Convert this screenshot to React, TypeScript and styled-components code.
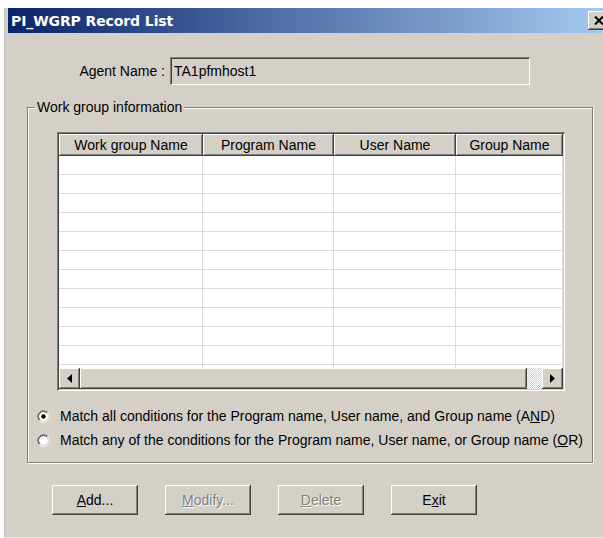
import styled, { createGlobalStyle } from 'styled-components'

const GlobalStyle = createGlobalStyle`
  html, body {
    margin: 0;
    padding: 0;
    background: #fff;
    overflow: hidden;
  }
  body {
    font-family: "Liberation Sans", Arial, sans-serif;
    font-size: 14px;
    color: #000;
  }
`

const columns = [
  { title: 'Work group Name', width: 144 },
  { title: 'Program Name', width: 131 },
  { title: 'User Name', width: 122 },
  { title: 'Group Name', width: 107 },
]
const gridColumns = columns.map((c) => `${c.width}px`).join(' ')

const rows = Array.from({ length: 12 }, (_, i) => i)

function Arrow({ dir }: { dir: 'left' | 'right' }) {
  return (
    <svg width="5" height="9" viewBox="0 0 5 9">
      {dir === 'left' ? (
        <path d="M5 0 L0 4.5 L5 9 Z" fill="#000" />
      ) : (
        <path d="M0 0 L5 4.5 L0 9 Z" fill="#000" />
      )}
    </svg>
  )
}

function RadioMark({ checked }: { checked?: boolean }) {
  return (
    <svg width="13" height="13" viewBox="0 0 13 13">
      <circle cx="6.5" cy="6.5" r="5" fill="#fff" />
      <path d="M2.26 10.74 A6 6 0 0 1 10.74 2.26" stroke="#808080" fill="none" />
      <path d="M10.74 2.26 A6 6 0 0 1 2.26 10.74" stroke="#fff" fill="none" />
      <path d="M2.96 10.04 A5 5 0 0 1 10.04 2.96" stroke="#404040" fill="none" />
      <path d="M10.04 2.96 A5 5 0 0 1 2.96 10.04" stroke="#d4d0c8" fill="none" />
      {checked && <circle cx="6.5" cy="6.5" r="2.2" fill="#000" />}
    </svg>
  )
}

export default function App() {
  return (
    <>
      <GlobalStyle />
      <Window>
        <TitleBar>
          <Title>PI_WGRP Record List</Title>
          <CloseButton>
            <svg width="10" height="9" viewBox="0 0 10 9">
              <path d="M1 0.5 L9 8.5 M9 0.5 L1 8.5" stroke="#000" strokeWidth="2" />
            </svg>
          </CloseButton>
        </TitleBar>
        <Body>
          <AgentRow>
            <AgentLabel>Agent Name :</AgentLabel>
            <AgentField>TA1pfmhost1</AgentField>
          </AgentRow>

          <GroupBox>
            <Legend>Work group information</Legend>
            <ListView>
              <Header>
                {columns.map((c) => (
                  <HeaderCell key={c.title}>{c.title}</HeaderCell>
                ))}
              </Header>
              <ListBody>
                {rows.map((r) => (
                  <Row key={r}>
                    {columns.map((c) => (
                      <Cell key={c.title} />
                    ))}
                  </Row>
                ))}
              </ListBody>
              <HScroll>
                <ScrollButton>
                  <Arrow dir="left" />
                </ScrollButton>
                <Thumb />
                <Track />
                <ScrollButton>
                  <Arrow dir="right" />
                </ScrollButton>
              </HScroll>
            </ListView>

            <RadioList>
              <RadioRow>
                <RadioMark checked />
                <span>
                  Match all conditions for the Program name, User name, and Group name (A
                  <u>N</u>D)
                </span>
              </RadioRow>
              <RadioRow>
                <RadioMark />
                <span>
                  Match any of the conditions for the Program name, User name, or Group name (
                  <u>O</u>R)
                </span>
              </RadioRow>
            </RadioList>
          </GroupBox>

          <ButtonRow>
            <Button>
              <u>A</u>dd...
            </Button>
            <Button $disabled>
              <u>M</u>odify...
            </Button>
            <Button $disabled>
              <u>D</u>elete
            </Button>
            <Button>
              E<u>x</u>it
            </Button>
          </ButtonRow>
        </Body>
      </Window>
    </>
  )
}

const raised = `
  box-shadow: inset -1px -1px #404040, inset 1px 1px #fff, inset -2px -2px #808080;
`

const Window = styled.div`
  margin: 8px 0 0 4px;
  width: 610px;
  height: 530px;
  box-sizing: border-box;
  display: flex;
  flex-direction: column;
  padding: 0 3px 0 3px;
  background: #d4d0c8;
  border-left: 1px solid #c6c3bb;
  border-bottom: 1px solid #ecebe6;
`

const TitleBar = styled.div`
  height: 25px;
  flex-shrink: 0;
  display: flex;
  align-items: center;
  justify-content: space-between;
  padding: 0 2px 0 3px;
  background: linear-gradient(to right, #0a246a, #a6caf0);
`

const Title = styled.span`
  color: #fff;
  font-family: "DejaVu Sans", Tahoma, sans-serif;
  font-weight: bold;
  font-size: 14px;
  letter-spacing: -0.1px;
`

const CloseButton = styled.div`
  width: 21px;
  height: 19px;
  display: flex;
  align-items: center;
  justify-content: center;
  background: #d4d0c8;
  ${raised}
`

const Body = styled.div`
  flex: 1;
  display: flex;
  flex-direction: column;
  padding-top: 24px;
`

const AgentRow = styled.div`
  display: flex;
  align-items: center;
  height: 28px;
`

const AgentLabel = styled.div`
  width: 157px;
  margin-right: 5px;
  text-align: right;
`

const AgentField = styled.div`
  width: 360px;
  height: 28px;
  box-sizing: border-box;
  display: flex;
  align-items: center;
  padding-left: 4px;
  background: #d4d0c8;
  box-shadow: inset 1px 1px #808080, inset -1px -1px #fff, inset 2px 2px #404040,
    inset -2px -2px #d4d0c8;
`

const GroupBox = styled.div`
  position: relative;
  margin: 22px 0 0 19px;
  width: 566px;
  height: 356px;
  box-sizing: border-box;
  padding-top: 24px;
  border: 1px solid #808080;
  box-shadow: 1px 1px 0 #fff, inset 1px 1px 0 #fff;
`

const Legend = styled.span`
  position: absolute;
  top: -9px;
  left: 7px;
  padding: 0 2px;
  line-height: 16px;
  background: #d4d0c8;
`

const ListView = styled.div`
  margin-left: 29px;
  width: 508px;
  height: 259px;
  box-sizing: border-box;
  padding: 2px;
  display: flex;
  flex-direction: column;
  background: #fff;
  box-shadow: inset 1px 1px #808080, inset -1px -1px #fff, inset 2px 2px #404040,
    inset -2px -2px #d4d0c8;
`

const Header = styled.div`
  display: grid;
  grid-template-columns: ${gridColumns};
  height: 22px;
  flex-shrink: 0;
`

const HeaderCell = styled.div`
  background: #d4d0c8;
  text-align: center;
  line-height: 22px;
  white-space: nowrap;
  overflow: hidden;
  ${raised}
`

const ListBody = styled.div`
  flex: 1;
  overflow: hidden;
  background: #fff;
`

const Row = styled.div`
  display: grid;
  grid-template-columns: ${gridColumns};
  height: 19px;
  box-sizing: border-box;
  border-bottom: 1px solid #dedbd4;
`

const Cell = styled.div`
  border-right: 1px solid #dedbd4;
`

const HScroll = styled.div`
  display: flex;
  height: 21px;
  flex-shrink: 0;
`

const ScrollButton = styled.div`
  width: 21px;
  height: 21px;
  display: flex;
  align-items: center;
  justify-content: center;
  background: #d4d0c8;
  ${raised}
`

const Thumb = styled.div`
  width: 447px;
  background: #d4d0c8;
  ${raised}
`

const Track = styled.div`
  flex: 1;
  background-color: #d4d0c8;
  background-image: repeating-conic-gradient(#fff 0 25%, #d4d0c8 0 50%);
  background-size: 2px 2px;
`

const RadioList = styled.div`
  margin-top: 13px;
  padding-left: 9px;
`

const RadioRow = styled.div`
  display: flex;
  align-items: center;
  gap: 10px;
  height: 24px;
  white-space: nowrap;

  svg {
    flex-shrink: 0;
  }
`

const ButtonRow = styled.div`
  display: flex;
  gap: 27px;
  margin-top: 22px;
  padding-left: 44px;
`

const Button = styled.div<{ $disabled?: boolean }>`
  width: 86px;
  height: 30px;
  display: flex;
  align-items: center;
  justify-content: center;
  background: #d4d0c8;
  color: ${(p) => (p.$disabled ? '#808080' : '#000')};
  text-shadow: ${(p) => (p.$disabled ? '1px 1px 0 #fff' : 'none')};
  ${raised}
`
